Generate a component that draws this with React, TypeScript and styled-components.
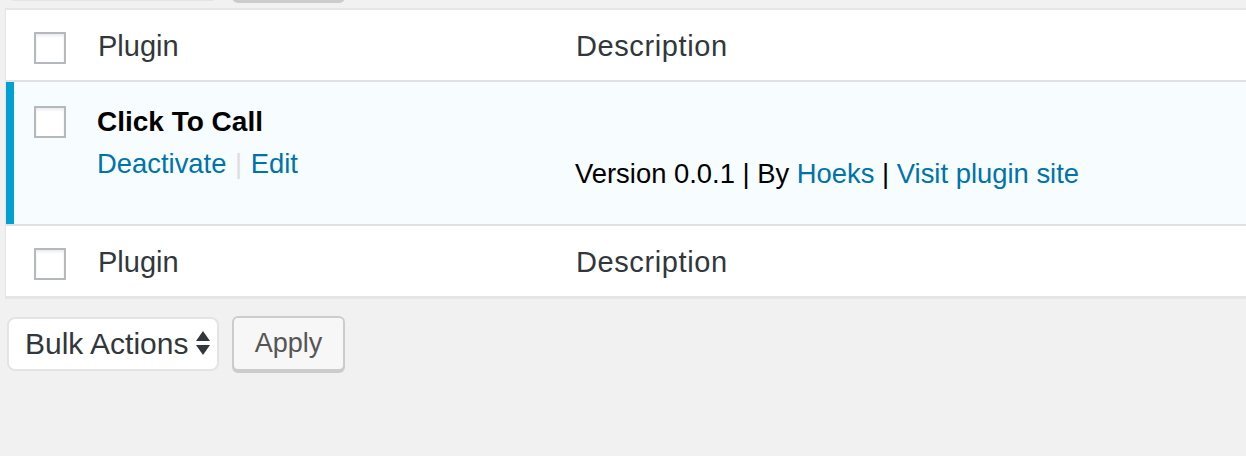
import React from "react";
import styled, { createGlobalStyle } from "styled-components";

const GlobalStyle = createGlobalStyle`
  html, body {
    margin: 0;
    padding: 0;
    background: #f1f1f1;
    overflow: hidden;
    font-family: "Liberation Sans", Arial, sans-serif;
  }
`;

const Page = styled.div`
  width: 1246px;
  height: 456px;
  overflow: hidden;
  padding-left: 5px;
  box-sizing: border-box;
`;

const Tablenav = styled.div<{ $top?: boolean }>`
  display: flex;
  align-items: flex-start;
  gap: 13px;
  margin-left: 2px;
  height: 55px;
  margin-top: ${(p) => (p.$top ? "-54px" : "18px")};
  margin-bottom: ${(p) => (p.$top ? "7px" : "0")};
`;

const SelectBox = styled.div`
  box-sizing: border-box;
  margin-top: 1px;
  width: 212px;
  height: 54px;
  display: flex;
  align-items: center;
  justify-content: space-between;
  padding: 0 7px 0 16px;
  background: #fff;
  border: 2px solid #e4e4e4;
  border-radius: 8px;
  color: #32373c;
  font-size: 30px;
`;

const ApplyButton = styled.button`
  box-sizing: border-box;
  width: 113px;
  height: 55px;
  padding: 0;
  background: #f7f7f7;
  border: 2px solid #cccccc;
  border-radius: 6px;
  box-shadow: 0 2px 0 #cccccc;
  color: #555;
  font-family: "Liberation Sans", Arial, sans-serif;
  font-size: 27px;
`;

const Table = styled.div`
  width: 1320px;
  background: #fff;
  border-top: 2px solid #e5e5e5;
  border-left: 1px solid #e5e5e5;
  border-bottom: 2px solid #e5e5e5;
  box-shadow: 0 1px 1px rgba(0, 0, 0, 0.04);
`;

const Row = styled.div<{ $height: number; $active?: boolean; $line?: boolean }>`
  display: flex;
  height: ${(p) => p.$height}px;
  background: ${(p) => (p.$active ? "#f7fcfe" : "#fff")};
  border-bottom: ${(p) => (p.$line ? "2px solid #e1e1e1" : "none")};
`;

const CheckCell = styled.div<{ $pad: number; $active?: boolean }>`
  box-sizing: border-box;
  width: 91px;
  flex: none;
  padding-left: 28px;
  padding-top: ${(p) => p.$pad}px;
  box-shadow: ${(p) => (p.$active ? "inset 8px 0 0 #00a0d2" : "none")};
`;

const Checkbox = styled.span`
  display: block;
  box-sizing: border-box;
  width: 32px;
  height: 32px;
  border: 2px solid #b4b9be;
  background: #fff;
  box-shadow: inset 0 2px 3px rgba(0, 0, 0, 0.08);
`;

const ColumnTitle = styled.div<{ $width?: number }>`
  box-sizing: border-box;
  width: ${(p) => (p.$width ? `${p.$width}px` : "auto")};
  flex: none;
  padding: 16px 0 0 1px;
  font-size: 29px;
  line-height: 40px;
  color: #32373c;
`;

const WideTitle = styled(ColumnTitle)`
  letter-spacing: 0.6px;
`;

const PluginCell = styled.div`
  box-sizing: border-box;
  width: 480px;
  flex: none;
  padding-top: 20px;
`;

const PluginTitle = styled.strong`
  display: block;
  font-size: 28px;
  line-height: 40px;
  font-weight: 700;
  color: #000;
`;

const RowActions = styled.div`
  margin-top: 2px;
  font-size: 27.4px;
  line-height: 40px;
  color: #ddd;
  word-spacing: 1px;
`;

const Link = styled.a`
  color: #0073aa;
  text-decoration: none;
`;

const DescCell = styled.div`
  flex: 1;
  padding-top: 20px;
  font-size: 27.4px;
  line-height: 40px;
  color: #000;
`;

const PluginDescription = styled.div`
  height: 52px;
`;

const VersionLine = styled.div`
  margin-left: -2px;
`;

const Arrows = () => (
  <svg width="14" height="26" viewBox="0 0 14 26" aria-hidden="true">
    <path d="M7 0 L14 10 L0 10 Z" fill="#32373c" />
    <path d="M0 14 L14 14 L7 24 Z" fill="#32373c" />
  </svg>
);

const Nav = ({ top }: { top?: boolean }) => (
  <Tablenav $top={top}>
    <SelectBox>
      <span>Bulk Actions</span>
      <Arrows />
    </SelectBox>
    <ApplyButton>Apply</ApplyButton>
  </Tablenav>
);

export default function App() {
  return (
    <>
      <GlobalStyle />
      <Page>
        <Nav top />
        <Table>
          <Row $height={70} $line>
            <CheckCell $pad={22}>
              <Checkbox />
            </CheckCell>
            <ColumnTitle $width={478}>Plugin</ColumnTitle>
            <WideTitle>Description</WideTitle>
          </Row>
          <Row $height={142} $active $line>
            <CheckCell $pad={24} $active>
              <Checkbox />
            </CheckCell>
            <PluginCell>
              <PluginTitle>Click To Call</PluginTitle>
              <RowActions>
                <Link href="#">Deactivate</Link> | <Link href="#">Edit</Link>
              </RowActions>
            </PluginCell>
            <DescCell>
              <PluginDescription />
              <VersionLine>
                Version 0.0.1 | By <Link href="#">Hoeks</Link> |{" "}
                <Link href="#">Visit plugin site</Link>
              </VersionLine>
            </DescCell>
          </Row>
          <Row $height={70}>
            <CheckCell $pad={22}>
              <Checkbox />
            </CheckCell>
            <ColumnTitle $width={478}>Plugin</ColumnTitle>
            <WideTitle>Description</WideTitle>
          </Row>
        </Table>
        <Nav />
      </Page>
    </>
  );
}
